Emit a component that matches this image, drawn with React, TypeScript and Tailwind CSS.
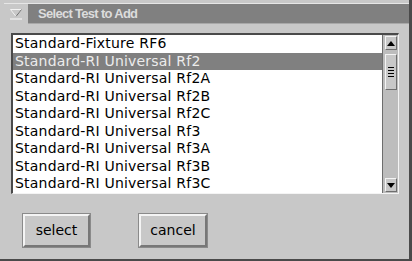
import React, { useState } from 'react';

const tests = [
  'Standard-Fixture RF6',
  'Standard-RI Universal Rf2',
  'Standard-RI Universal Rf2A',
  'Standard-RI Universal Rf2B',
  'Standard-RI Universal Rf2C',
  'Standard-RI Universal Rf3',
  'Standard-RI Universal Rf3A',
  'Standard-RI Universal Rf3B',
  'Standard-RI Universal Rf3C',
];

const font = { fontFamily: '"DejaVu Sans", Verdana, sans-serif' };
const titleFont = { fontFamily: '"Liberation Sans", Arial, sans-serif' };

const MenuIcon: React.FC = () => (
  <svg width="12" height="11" viewBox="0 0 12 11">
    <path d="M0.5 0.5 H11.5 L6 7.5 Z" fill="none" stroke="#f2f2f2" strokeWidth="1" />
    <path d="M11.5 0.5 L6 7.5" stroke="#6a6a6a" strokeWidth="1" />
    <line x1="0" y1="10" x2="12" y2="10" stroke="#f2f2f2" strokeWidth="1.2" />
  </svg>
);

const ArrowButton: React.FC<{ dir: 'up' | 'down' }> = ({ dir }) => (
  <div className="w-[12px] h-[14px] bg-[#c8c8c8] border border-t-[#f4f4f4] border-l-[#f4f4f4] border-b-[#6e6e6e] border-r-[#6e6e6e] flex items-center justify-center">
    <svg width="8" height="5" viewBox="0 0 8 5">
      {dir === 'up' ? (
        <path d="M0 5 L4 0 L8 5 Z" fill="#000" />
      ) : (
        <path d="M0 0 L8 0 L4 5 Z" fill="#000" />
      )}
    </svg>
  </div>
);

const Button: React.FC<{ label: string; className?: string }> = ({ label, className }) => (
  <button
    className={`h-[35px] border border-[#8a8a8a] bg-[#c8c8c8] ${className ?? ''}`}
    style={font}
  >
    <div className="h-full w-full flex items-center justify-center border-2 border-t-[#f4f4f4] border-l-[#f4f4f4] border-b-[#777] border-r-[#777] text-[14px] text-black">
      {label}
    </div>
  </button>
);

export default function App() {
  const [selected, setSelected] = useState(1);

  return (
    <div className="w-[412px] h-[261px] bg-[#c8c8c8] flex flex-col border-r-[3px] border-b-[2px] border-r-[#4a4a4a] border-b-[#4a4a4a] pt-[3px] pl-[4px]">
      {/* Title bar */}
      <div className="flex h-[21px] border-t border-[#e6e6e6]">
        <div className="w-[24px] flex items-center justify-center pt-[1px]">
          <MenuIcon />
        </div>
        <div
          className="flex-1 bg-[#808080] flex items-center pl-[10px] text-[13px] font-bold tracking-[-0.7px] text-[#dcdcdc] border-b border-[#a8a8a8]"
          style={titleFont}
        >
          Select Test to Add
        </div>
      </div>

      {/* List */}
      <div className="ml-[7px] mt-[9px] w-[388px] h-[161px] flex border-t-2 border-l-2 border-t-[#4a4a4a] border-l-[#4a4a4a] border-b border-r border-b-[#f4f4f4] border-r-[#f4f4f4]">
        <div className="flex-1 bg-white border-r border-[#6e6e6e] overflow-hidden">
          {tests.map((t, i) => (
            <div
              key={t}
              onClick={() => setSelected(i)}
              className={`h-[17.5px] leading-[17.5px] pl-[2px] text-[14px] tracking-[0.2px] whitespace-nowrap ${
                i === selected ? 'bg-[#808080] text-[#ececec]' : 'text-black'
              }`}
              style={font}
            >
              {t}
            </div>
          ))}
        </div>
        <div className="w-[15px] bg-[#bdbdbd] flex flex-col items-center pt-[1px] pb-[1px]">
          <ArrowButton dir="up" />
          <div className="mt-[4px] w-[12px] h-[36px] bg-[#c8c8c8] border border-t-[#f4f4f4] border-l-[#f4f4f4] border-b-[#6e6e6e] border-r-[#6e6e6e] flex flex-col items-center justify-center gap-[2px]">
            <div className="w-[6px] h-px bg-black" />
            <div className="w-[6px] h-px bg-black" />
            <div className="w-[6px] h-px bg-black" />
            <div className="w-[6px] h-px bg-black" />
          </div>
          <div className="flex-1" />
          <ArrowButton dir="down" />
        </div>
      </div>

      {/* Buttons */}
      <div className="flex mt-[19px] pl-[18px] gap-[47px]">
        <Button label="select" className="w-[69px]" />
        <Button label="cancel" className="w-[70px]" />
      </div>
    </div>
  );
}
